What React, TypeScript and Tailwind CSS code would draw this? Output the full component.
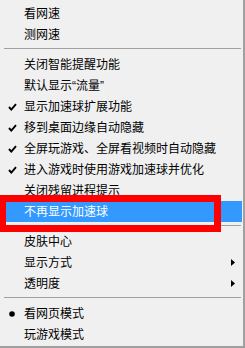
import React from "react";

type Item =
  | { kind: "sep" }
  | {
      kind: "item";
      label: string;
      mark?: "check" | "dot";
      sub?: boolean;
      active?: boolean;
    };

const items: Item[] = [
  { kind: "item", label: "看网速" },
  { kind: "item", label: "测网速" },
  { kind: "sep" },
  { kind: "item", label: "关闭智能提醒功能" },
  { kind: "item", label: "默认显示“流量”" },
  { kind: "item", label: "显示加速球扩展功能", mark: "check" },
  { kind: "item", label: "移到桌面边缘自动隐藏", mark: "check" },
  { kind: "item", label: "全屏玩游戏、全屏看视频时自动隐藏", mark: "check" },
  { kind: "item", label: "进入游戏时使用游戏加速球并优化", mark: "check" },
  { kind: "item", label: "关闭残留进程提示" },
  { kind: "item", label: "不再显示加速球", active: true },
  { kind: "sep" },
  { kind: "item", label: "皮肤中心" },
  { kind: "item", label: "显示方式", sub: true },
  { kind: "item", label: "透明度", sub: true },
  { kind: "sep" },
  { kind: "item", label: "看网页模式", mark: "dot" },
  { kind: "item", label: "玩游戏模式" },
];

function Check() {
  return (
    <svg width="9" height="8" viewBox="0 0 9 8">
      <path d="M1 4 L3.3 6.6 L8 1.2" fill="none" stroke="#000" strokeWidth="1.9" />
    </svg>
  );
}

function Dot() {
  return (
    <svg width="6" height="6" viewBox="0 0 6 6">
      <circle cx="3" cy="3" r="2.8" fill="#000" />
    </svg>
  );
}

function Arrow() {
  return (
    <svg width="4" height="7" viewBox="0 0 4 7">
      <polygon points="0,0 4,3.5 0,7" fill="#000" />
    </svg>
  );
}

export default function App() {
  return (
    <div
      className="relative w-[245px] h-[348px] overflow-hidden bg-[#f0f0f0] border-r-2 border-b-2 border-[#a0a0a0] box-border text-[12px] leading-none text-black"
      style={{ fontFamily: '"Liberation Sans", "Noto Sans CJK SC", sans-serif' }}
    >
      <div className="flex flex-col pt-[3px] pl-[3px] pr-[1px]">
        {items.map((it, i) =>
          it.kind === "sep" ? (
            <div key={i} className="h-[9px] pt-[3px] px-[1px]">
              <div className="h-px bg-[#a0a0a0]" />
            </div>
          ) : (
            <div
              key={i}
              className={
                it.active
                  ? "h-[21px] flex items-center bg-[#3399ff] text-white"
                  : "h-[21px] flex items-center"
              }
            >
              <div className="w-[18px] flex justify-center items-center">
                {it.mark === "check" ? <Check /> : it.mark === "dot" ? <Dot /> : null}
              </div>
              <span className="ml-[3px] whitespace-nowrap">{it.label}</span>
              {it.sub ? (
                <div className="ml-auto mr-[7px] flex items-center">
                  <Arrow />
                </div>
              ) : null}
            </div>
          )
        )}
      </div>
      <div className="absolute left-[-1px] top-[195px] w-[222px] h-[37px] border-[7px] border-[#ff0000]" />
    </div>
  );
}
